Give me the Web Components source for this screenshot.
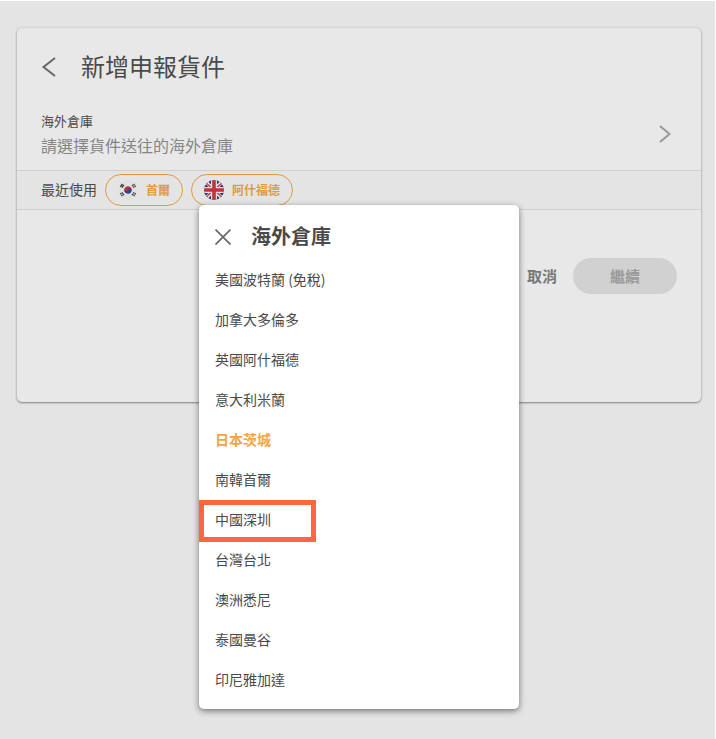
<!DOCTYPE html>
<html lang="zh-Hant">
<head>
<meta charset="utf-8">
<meta name="viewport" content="width=device-width, initial-scale=1">
<title>新增申報貨件</title>
<style>
    html {
        min-height: 100%;
        background: #fff;
    }
    body {
        margin: 0;
        font-family: "Noto Sans CJK TC", "Noto Sans", sans-serif;
        color: #4a4a4a;
    }
</style>
</head>
<body>

<shipment-page>
    <shipment-card heading="新增申報貨件">
        <warehouse-field label="海外倉庫" placeholder="請選擇貨件送往的海外倉庫"></warehouse-field>
        <recent-bar label="最近使用">
            <warehouse-chip flag="kr">首爾</warehouse-chip>
            <warehouse-chip flag="gb">阿什福德</warehouse-chip>
        </recent-bar>
        <form-actions></form-actions>
        <warehouse-menu slot="menu" heading="海外倉庫">
            <warehouse-option>美國波特蘭 (免稅)</warehouse-option>
            <warehouse-option>加拿大多倫多</warehouse-option>
            <warehouse-option>英國阿什福德</warehouse-option>
            <warehouse-option>意大利米蘭</warehouse-option>
            <warehouse-option selected>日本茨城</warehouse-option>
            <warehouse-option>南韓首爾</warehouse-option>
            <warehouse-option marked>中國深圳</warehouse-option>
            <warehouse-option>台灣台北</warehouse-option>
            <warehouse-option>澳洲悉尼</warehouse-option>
            <warehouse-option>泰國曼谷</warehouse-option>
            <warehouse-option>印尼雅加達</warehouse-option>
        </warehouse-menu>
    </shipment-card>
</shipment-page>

<script>
const BUTTON_RESET = `
    *, *::before { box-sizing: border-box; }
    button {
        margin: 0;
        padding: 0;
        border: 0;
        background: none;
        font: inherit;
        color: inherit;
        cursor: pointer;
    }
    svg { display: block; }
`;

const FLAGS = {
    kr: `
        <svg width="20" height="20" viewBox="0 0 20 20" aria-hidden="true">
            <circle cx="10" cy="10" r="10" fill="#e0e0e0"/>
            <g transform="rotate(20 10 10)">
                <path d="M6.3 10a3.7 3.7 0 0 1 7.4 0z" fill="#b92f36"/>
                <path d="M6.3 10a3.7 3.7 0 0 0 7.4 0z" fill="#29478f"/>
                <circle cx="8.2" cy="10" r="1.8" fill="#b92f36"/>
                <circle cx="11.8" cy="10" r="1.8" fill="#29478f"/>
            </g>
            <g stroke="#333" stroke-width="1.3" fill="none">
                <path d="M2.4 6.8l2-2.8M3.9 7.7l2-2.8"/>
                <path d="M15.6 4l2 2.8M14.1 4.900l2 2.800" stroke-dasharray="1.5 .5"/>
                <path d="M2.4 13.2l2 2.8M3.900 12.300l2 2.800" stroke-dasharray="1.5 .5"/>
                <path d="M15.600 16l2-2.800M14.100 15.100l2-2.800" stroke-dasharray="1.5 .5"/>
            </g>
        </svg>`,
    gb: `
        <svg width="20" height="20" viewBox="0 0 20 20" aria-hidden="true">
            <defs><clipPath id="round"><circle cx="10" cy="10" r="10"/></clipPath></defs>
            <g clip-path="url(#round)">
                <path d="M0 0h20v20H0z" fill="#263573"/>
                <path d="M0 0l20 20M20 0L0 20" stroke="#e0e0e0" stroke-width="3.6"/>
                <path d="M10 10L1.500 2.500M10 10l8.500-7.500M10 10l-8.500 7.500M10 10l8.500 7.500" stroke="#bd343c" stroke-width="1.200"/>
                <path d="M10 0v20M0 10h20" stroke="#e0e0e0" stroke-width="6"/>
                <path d="M10 0v20M0 10h20" stroke="#bd343c" stroke-width="3.600"/>
            </g>
        </svg>`
};

class ShipmentPage extends HTMLElement {

    constructor() {
        super();
        this.attachShadow({ mode: 'open' });
    }

    connectedCallback() {
        this.shadowRoot.innerHTML =
        `
        <style>
            :host {
                display: block;
                box-sizing: border-box;
                min-height: calc(100vh - 1px);
                margin: 1px 1px 0 0;
                padding: 27px 14px 27px 17px;
                background: #e4e4e4;
            }
        </style>
        <slot></slot>
        `;
    }
}

class ShipmentCard extends HTMLElement {

    constructor() {
        super();
        this.attachShadow({ mode: 'open' });
    }

    connectedCallback() {
        this.shadowRoot.innerHTML =
        `
        <style>
            ${BUTTON_RESET}
            :host {
                display: block;
                position: relative;
                padding-bottom: 108px;
                border-radius: 5px;
                background: #e8e8e8;
                box-shadow: 0 1px 2px rgba(0, 0, 0, .4), 0 0 3px rgba(0, 0, 0, .12);
            }
            header {
                display: flex;
                align-items: center;
                gap: 24px;
                padding: 19px 24px 17px;
            }
            h1 {
                margin: 0;
                padding-bottom: 2px;
                font-size: 24px;
                font-weight: 400;
                line-height: 38px;
            }
        </style>
        <header>
            <button type="button" aria-label="返回">
                <svg width="16" height="20" viewBox="0 0 16 20" fill="none" stroke="#666" stroke-width="2">
                    <path d="M14 1L2.500 10L14 19"/>
                </svg>
            </button>
            <h1>${this.getAttribute('heading')}</h1>
        </header>
        <slot></slot>
        <slot name="menu"></slot>
        `;
    }
}

class WarehouseField extends HTMLElement {

    constructor() {
        super();
        this.attachShadow({ mode: 'open' });
    }

    connectedCallback() {
        this.shadowRoot.innerHTML =
        `
        <style>
            ${BUTTON_RESET}
            :host {
                display: block;
            }
            button {
                display: flex;
                align-items: center;
                justify-content: space-between;
                width: 100%;
                padding: 7px 30px 13px 24px;
                text-align: left;
            }
            .text {
                display: grid;
                gap: 2px;
            }
            .label {
                font-size: 13px;
                line-height: 20px;
            }
            .value {
                font-size: 16px;
                line-height: 24px;
                color: #858585;
            }
        </style>
        <button type="button" aria-haspopup="listbox">
            <span class="text">
                <span class="label">${this.getAttribute('label')}</span>
                <span class="value">${this.getAttribute('placeholder')}</span>
            </span>
            <svg width="12" height="18" viewBox="0 0 12 18" fill="none" stroke="#999" stroke-width="2">
                <path d="M1 1L10.500 9L1 17"/>
            </svg>
        </button>
        `;
    }
}

class RecentBar extends HTMLElement {

    constructor() {
        super();
        this.attachShadow({ mode: 'open' });
    }

    connectedCallback() {
        this.shadowRoot.innerHTML =
        `
        <style>
            :host {
                display: flex;
                align-items: center;
                gap: 8px;
                padding: 3px 24px;
                border: solid #cfcfcf;
                border-width: 1px 0;
                background: #e4e4e4;
                font-size: 14px;
                line-height: 20px;
            }
            span {
                padding-bottom: 2px;
            }
        </style>
        <span>${this.getAttribute('label')}</span>
        <slot></slot>
        `;
    }
}

class WarehouseChip extends HTMLElement {

    constructor() {
        super();
        this.attachShadow({ mode: 'open' });
    }

    connectedCallback() {
        this.shadowRoot.innerHTML =
        `
        <style>
            ${BUTTON_RESET}
            :host {
                display: block;
            }
            button {
                display: flex;
                align-items: center;
                gap: 8px;
                height: 32px;
                padding: 0 12px;
                border: 1px solid #e09a40;
                border-radius: 16px;
                font-size: 12px;
                font-weight: 700;
                color: #e09a40;
            }
        </style>
        <button type="button">
            ${FLAGS[this.getAttribute('flag')]}
            <slot></slot>
        </button>
        `;
    }
}

class FormActions extends HTMLElement {

    constructor() {
        super();
        this.attachShadow({ mode: 'open' });
    }

    connectedCallback() {
        this.shadowRoot.innerHTML =
        `
        <style>
            ${BUTTON_RESET}
            :host {
                display: flex;
                justify-content: flex-end;
                gap: 16px;
                padding: 48px 24px 0;
                font-size: 15px;
                font-weight: 700;
            }
            button {
                height: 36px;
                padding-bottom: 2px;
                color: #777;
            }
            .next {
                width: 104px;
                border-radius: 18px;
                background: #d1d1d1;
                color: #999;
            }
        </style>
        <button type="button">取消</button>
        <button type="submit" class="next" disabled>繼續</button>
        `;
    }
}

class WarehouseMenu extends HTMLElement {

    constructor() {
        super();
        this.attachShadow({ mode: 'open' });
    }

    connectedCallback() {
        this.shadowRoot.innerHTML =
        `
        <style>
            ${BUTTON_RESET}
            :host {
                position: absolute;
                top: 177px;
                left: calc(50% - 160px);
                box-sizing: border-box;
                width: 320px;
                padding-bottom: 9px;
                border-radius: 5px;
                background: #fff;
                box-shadow: 0 2px 6px rgba(0, 0, 0, .5);
            }
            header {
                display: flex;
                align-items: center;
                gap: 20px;
                padding: 15px 16px 8px;
            }
            h2 {
                margin: 0;
                font-size: 20px;
                font-weight: 700;
                line-height: 32px;
            }
        </style>
        <header>
            <button type="button" aria-label="關閉">
                <svg width="16" height="18" viewBox="0 -2 16 18" fill="none" stroke="#666" stroke-width="1.700">
                    <path d="M.5.5l15 15M15.500.5l-15 15"/>
                </svg>
            </button>
            <h2>${this.getAttribute('heading')}</h2>
        </header>
        <slot></slot>
        `;
    }
}

class WarehouseOption extends HTMLElement {

    constructor() {
        super();
        this.attachShadow({ mode: 'open' });
    }

    connectedCallback() {
        this.shadowRoot.innerHTML =
        `
        <style>
            ${BUTTON_RESET}
            :host {
                display: block;
                position: relative;
            }
            button {
                display: block;
                width: 100%;
                height: 40px;
                padding: 0 16px 2px;
                font-size: 14px;
                line-height: 20px;
                text-align: left;
            }
            :host([selected]) button {
                font-weight: 700;
                color: #f2a444;
            }
            :host([marked])::before {
                content: "";
                position: absolute;
                top: 0;
                left: 0;
                box-sizing: border-box;
                width: 117px;
                height: 42px;
                border: 5px solid #ff6540;
                pointer-events: none;
            }
        </style>
        <button type="button"><slot></slot></button>
        `;
    }
}

customElements.define('shipment-page', ShipmentPage);
customElements.define('shipment-card', ShipmentCard);
customElements.define('warehouse-field', WarehouseField);
customElements.define('recent-bar', RecentBar);
customElements.define('warehouse-chip', WarehouseChip);
customElements.define('form-actions', FormActions);
customElements.define('warehouse-menu', WarehouseMenu);
customElements.define('warehouse-option', WarehouseOption);
</script>
</body>
</html>
